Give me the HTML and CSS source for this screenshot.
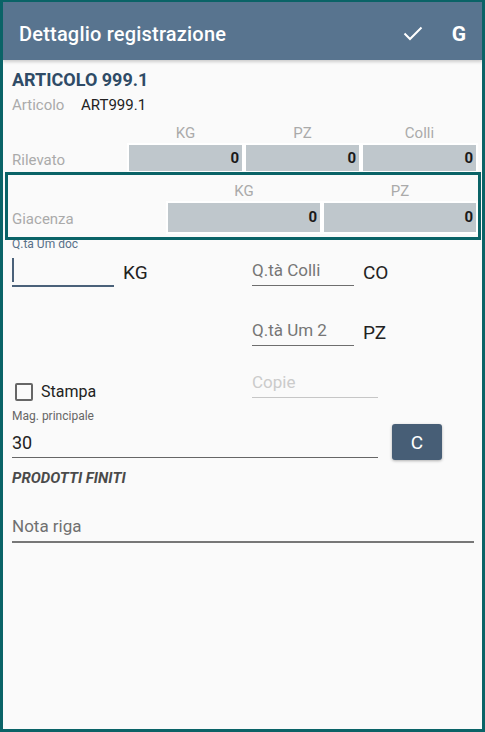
FILE: index.html
```html
<!DOCTYPE html>
<html lang="it">
<head>
    <meta charset="UTF-8">
    <meta name="viewport" content="width=device-width, initial-scale=1.0">
    <title>Dettaglio registrazione</title>
    <link rel="stylesheet" href="styles.css">
</head>
<body>

<div class="screen">
    <header class="appbar">
        <h1 class="appbar-title">Dettaglio registrazione</h1>
        <div class="appbar-actions">
            <svg class="icon-check" width="20" height="16" viewBox="0 0 20 16">
                <path d="M1.5 7.5 L7 13 L18.5 1.5" />
            </svg>
            <span class="appbar-g">G</span>
        </div>
    </header>

    <main class="content">
        <div class="art-title">ARTICOLO 999.1</div>
        <div class="art-code">
            <span class="label">Articolo</span>
            <span>ART999.1</span>
        </div>

        <div class="qty-grid rilevato">
            <span></span>
            <span class="col-head">KG</span>
            <span class="col-head">PZ</span>
            <span class="col-head">Colli</span>

            <span class="row-label">Rilevato</span>
            <div class="cell"><div class="val">0</div></div>
            <div class="cell"><div class="val">0</div></div>
            <div class="cell"><div class="val">0</div></div>
        </div>

        <div class="giacenza-box">
            <div class="qty-grid giacenza">
                <span></span>
                <span class="col-head">KG</span>
                <span class="col-head">PZ</span>

                <span class="row-label">Giacenza</span>
                <div class="cell"><div class="val">0</div></div>
                <div class="cell"><div class="val">0</div></div>
            </div>
        </div>

        <div class="float-label">Q.ta Um doc</div>

        <div class="form-grid">
            <div class="field-row">
                <div class="field focused"><span class="cursor"></span></div>
                <span class="unit">KG</span>
            </div>
            <div class="field-row">
                <div class="field"><span class="hint">Q.tà Colli</span></div>
                <span class="unit">CO</span>
            </div>

            <div></div>
            <div class="field-row row-um2">
                <div class="field"><span class="hint">Q.tà Um 2</span></div>
                <span class="unit">PZ</span>
            </div>

            <label class="check">
                <span class="check-box"></span>
                <span>Stampa</span>
            </label>
            <div class="field-row row-copie">
                <div class="field disabled"><span class="hint">Copie</span></div>
            </div>
        </div>

        <div class="small-label">Mag. principale</div>
        <div class="mag-row">
            <div class="field wide"><span class="value">30</span></div>
            <button class="btn-c">C</button>
        </div>

        <div class="section-title">PRODOTTI FINITI</div>

        <div class="field note"><span class="hint">Nota riga</span></div>
    </main>
</div>

</body>
</html>
```

FILE: styles.css
```css
body {
    margin: 0;
    font-family: Roboto, "Noto Sans", Arial, sans-serif;
    color: #222;
}

.screen {
    width: 485px;
    height: 732px;
    box-sizing: border-box;
    border: 3px solid #0a6367;
    border-top-width: 2px;
    background: #fafafa;
    overflow: hidden;
}

.appbar {
    height: 58px;
    background: #58748f;
    display: flex;
    align-items: center;
    justify-content: space-between;
    padding: 0 16px 0 16px;
    box-shadow: 0 2px 3px rgba(0, 0, 0, 0.18);
    position: relative;
    z-index: 2;
}

.appbar-title {
    margin: 0;
    color: #fff;
    font-size: 20px;
    font-weight: 500;
    line-height: 24px;
    letter-spacing: 0.2px;
    padding-top: 5px;
}

.appbar-actions {
    display: flex;
    align-items: center;
    gap: 29px;
    padding-top: 5px;
}

.icon-check path {
    fill: none;
    stroke: #fff;
    stroke-width: 2;
}

.appbar-g {
    color: #fff;
    font-size: 21px;
    font-weight: 700;
    line-height: 24px;
}

.content {
    padding: 9px 4px 0 9px;
}

.art-title {
    font-size: 18px;
    font-weight: 700;
    line-height: 22px;
    color: #2f4b66;
}

.art-code {
    margin-top: 4px;
    font-size: 15px;
    line-height: 20px;
    display: flex;
}

.art-code .label {
    color: #aaa;
    width: 69px;
}

.qty-grid {
    display: grid;
    font-size: 15px;
}

.rilevato {
    margin-top: 8px;
    grid-template-columns: 115px repeat(3, 117px);
}

.giacenza {
    grid-template-columns: 154px repeat(2, 156px);
}

.col-head {
    text-align: center;
    color: #aaa;
    line-height: 20px;
}

.row-label {
    color: #aaa;
    align-self: center;
    padding-top: 5px;
}

.cell {
    background: #fff;
    padding: 2px 2px 1px;
}

.val {
    background: #bfc7cc;
    height: 26px;
    line-height: 26px;
    text-align: right;
    padding-right: 3px;
    font-weight: 700;
    color: #1a1a1a;
}

.giacenza-box {
    position: relative;
    z-index: 1;
    margin: 0 -3px 0 -7px;
    border: 3px solid #0a6367;
    padding: 6px 0 3px 4px;
}

.giacenza .cell {
    padding: 2px;
}

.giacenza .val {
    height: 29px;
    line-height: 29px;
}

.giacenza .row-label {
    padding-top: 3px;
}

.float-label {
    margin-top: -3px;
    font-size: 12px;
    line-height: 14px;
    color: #587089;
}

.form-grid {
    display: grid;
    grid-template-columns: 240px 1fr;
    align-items: start;
}

.field-row {
    display: flex;
    align-items: flex-start;
}

.field {
    width: 102px;
    height: 34px;
    border-bottom: 1px solid #6e6e6e;
    box-sizing: content-box;
}

.field.focused {
    border-bottom: 2px solid #4a6179;
}

.cursor {
    display: block;
    width: 2px;
    height: 24px;
    margin-top: 7px;
    background: #4a6179;
}

.hint,
.value {
    display: block;
    padding-top: 9px;
    font-size: 17px;
    line-height: 20px;
    color: #767676;
}

.unit {
    margin: 11px 0 0 9px;
    font-size: 19px;
    line-height: 22px;
    color: #222;
}

.row-um2 {
    margin-top: 24px;
}

.row-copie {
    margin-top: 17px;
}

.field.disabled {
    width: 126px;
    border-bottom-color: #c6c6c6;
}

.field.disabled .hint {
    color: #cbcbcb;
}

.check {
    margin: 36px 0 0 3px;
    display: flex;
    align-items: center;
    gap: 8px;
    font-size: 16px;
    line-height: 20px;
    color: #222;
}

.check-box {
    width: 14px;
    height: 14px;
    border: 2px solid #666;
    border-radius: 2px;
}

.small-label {
    margin-top: 7px;
    font-size: 12px;
    line-height: 14px;
    color: #666;
}

.mag-row {
    display: flex;
    align-items: flex-start;
}

.field.wide {
    width: 366px;
    border-bottom-color: #666;
}

.value {
    padding-top: 10px;
    font-size: 18px;
    color: #222;
}

.btn-c {
    margin: 1px 0 0 14px;
    width: 50px;
    height: 36px;
    border: none;
    border-radius: 3px;
    background: #475e76;
    color: #fff;
    font-family: inherit;
    font-size: 19px;
    box-shadow: 0 1px 3px rgba(0, 0, 0, 0.3);
}

.section-title {
    margin-top: 9px;
    font-size: 15px;
    line-height: 18px;
    font-weight: 700;
    font-style: italic;
    color: #4a4a4a;
}

.field.note {
    margin-top: 20px;
    width: 462px;
    border-bottom: 2px solid #777;
}

.field.note .hint {
    color: #707070;
}
```
